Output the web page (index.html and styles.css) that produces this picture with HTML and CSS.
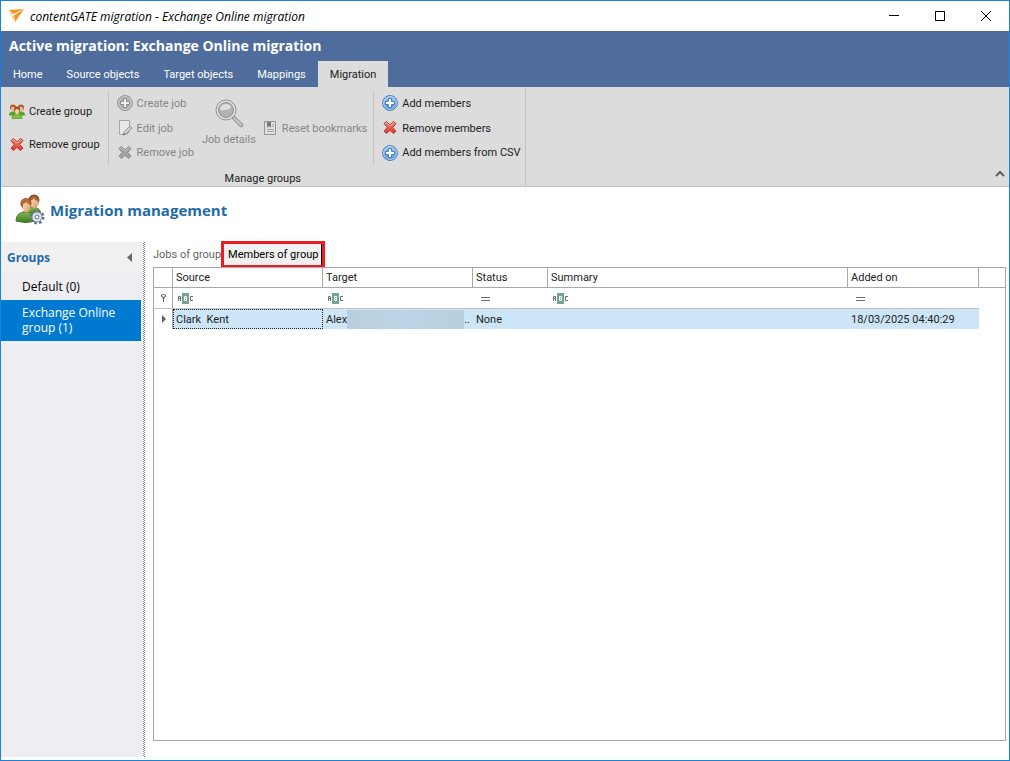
FILE: index.html
```html
<!DOCTYPE html>
<html lang="en">
<head>
    <meta charset="UTF-8">
    <meta name="viewport" content="width=device-width, initial-scale=1.0">
    <title>contentGATE migration - Exchange Online migration</title>
    <link rel="stylesheet" href="styles.css">
</head>
<body>
    <!-- Shared icons -->
    <svg class="icon-defs" aria-hidden="true">
        <defs>
            <linearGradient id="blueFill" x1="0" y1="0" x2="0" y2="1">
                <stop offset="0" stop-color="#9ccaf2"/>
                <stop offset="1" stop-color="#4f97de"/>
            </linearGradient>
            <linearGradient id="redFill" x1="0" y1="0" x2="0" y2="1">
                <stop offset="0" stop-color="#f08a78"/>
                <stop offset="1" stop-color="#d8392a"/>
            </linearGradient>
            <linearGradient id="greenFill" x1="0" y1="0" x2="0" y2="1">
                <stop offset="0" stop-color="#86ba4c"/>
                <stop offset="1" stop-color="#3f7a24"/>
            </linearGradient>
            <linearGradient id="faceFill" x1="0" y1="0" x2="1" y2="1">
                <stop offset="0" stop-color="#fbe0bd"/>
                <stop offset="1" stop-color="#dc9a62"/>
            </linearGradient>
        </defs>
        <symbol id="i-add" viewBox="0 0 16 16">
            <circle cx="8" cy="8" r="7.4" fill="url(#blueFill)" stroke="#4a76b0" stroke-width="1"/>
            <circle cx="8" cy="8" r="6.4" fill="none" stroke="#b4d6f5" stroke-width="1"/>
            <path d="M6.500 3.500h3v3h3v3h-3v3h-3v-3h-3v-3h3z" fill="#fff" stroke="#4a7cbc" stroke-width="1"/>
        </symbol>
        <symbol id="i-add-off" viewBox="0 0 16 16">
            <circle cx="8" cy="8" r="7.4" fill="#b2b2b2" stroke="#8c8c8c" stroke-width="1"/>
            <circle cx="8" cy="8" r="6.4" fill="none" stroke="#cfcfcf" stroke-width="1"/>
            <path d="M6.500 3.500h3v3h3v3h-3v3h-3v-3h-3v-3h3z" fill="#eee" stroke="#8c8c8c" stroke-width="1"/>
        </symbol>
        <symbol id="i-remove" viewBox="0 0 16 16">
            <path d="M2 3.500L4.500 1.500L8 4.800L11.500 1.500L14 3.500L10.800 7.500L14 11.200L11.500 13.500L8 10.300L4.500 13.500L2 11.200L5.200 7.500z" fill="url(#redFill)" stroke="#b8382c" stroke-linejoin="round"/>
            <path d="M3.500 3.700l1-1L8 6l3.500-3.300 1 1" fill="none" stroke="#f8b4a6"/>
        </symbol>
        <symbol id="i-remove-off" viewBox="0 0 16 16">
            <path d="M2 3.500L4.500 1.500L8 4.800L11.500 1.500L14 3.500L10.800 7.500L14 11.200L11.500 13.500L8 10.300L4.500 13.500L2 11.200L5.200 7.500z" fill="#a2a2a2" stroke="#8c8c8c" stroke-linejoin="round"/>
            <path d="M3.500 3.700l1-1L8 6l3.500-3.300 1 1" fill="none" stroke="#c6c6c6"/>
        </symbol>
        <symbol id="i-abc" viewBox="0 0 16 11">
            <path d="M.5 8V3.500h2V8M.5 5.500h2" fill="none" stroke="#6e6e6e"/>
            <rect x="4" y="0" width="7" height="11" fill="#73a594"/>
            <path d="M6.500 3.500h2v4h-2zM6.500 5.500h2" fill="none" stroke="#fff"/>
            <path d="M15 3.500h-2.500v4H15" fill="none" stroke="#6e6e6e"/>
        </symbol>
        <symbol id="i-equals" viewBox="0 0 16 11">
            <path d="M3 4.500h9M3 7.500h9" stroke="#6e6e6e"/>
        </symbol>
    </svg>

    <div class="window">
        <header class="titlebar">
            <svg class="logo" width="16" height="14" viewBox="0 0 16 14">
                <path d="M0 1L15 0L4 5z" fill="#f7941e"/>
                <path d="M15 0L6 13L5 6.500z" fill="#f7941e"/>
                <path d="M1 3l2 2-.5 2.500zM3 8l1.500-1.500L5 12z" fill="#f9b05a"/>
            </svg>
            <span class="window-title">contentGATE migration - Exchange Online migration</span>
            <div class="window-buttons">
                <button type="button" aria-label="Minimize"><svg width="10" height="10" viewBox="0 0 10 10"><path d="M0 4.500h10" stroke="#000"/></svg></button>
                <button type="button" aria-label="Maximize"><svg width="10" height="10" viewBox="0 0 10 10"><rect x=".5" y=".5" width="9" height="9" fill="none" stroke="#000"/></svg></button>
                <button type="button" aria-label="Close"><svg width="10" height="10" viewBox="0 0 10 10"><path d="M0 0l10 10M10 0L0 10" stroke="#000"/></svg></button>
            </div>
        </header>

        <div class="banner">
            <h1>Active migration: Exchange Online migration</h1>
            <nav class="tabs">
                <a href="#home">Home</a>
                <a href="#source">Source objects</a>
                <a href="#target">Target objects</a>
                <a href="#mappings">Mappings</a>
                <a href="#migration" class="active">Migration</a>
            </nav>
        </div>

        <div class="ribbon">
            <section class="ribbon-group">
                <div class="ribbon-tools">
                    <div class="tool-column groups">
                        <button type="button" class="tool">
                            <svg width="16" height="16" viewBox="0 0 16 16">
                                <circle cx="4" cy="3.500" r="3" fill="#a8592a"/>
                                <circle cx="12" cy="3.500" r="3" fill="#a8592a"/>
                                <ellipse cx="4" cy="5" rx="2" ry="2.500" fill="#f0c090"/>
                                <ellipse cx="12" cy="5" rx="2" ry="2.500" fill="#f0c090"/>
                                <path d="M0 11.500q0-4 4-4h8q4 0 4 4z" fill="#5f9e32"/>
                                <path d="M3 14.500q0-5 5-5t5 5z" fill="#7cc242" stroke="#478a22" stroke-width=".6"/>
                                <circle cx="8" cy="5.500" r="3" fill="#9a4d22"/>
                                <ellipse cx="8" cy="7.500" rx="2" ry="2.800" fill="#f7d0a2"/>
                            </svg>
                            Create group
                        </button>
                        <button type="button" class="tool"><svg width="16" height="16"><use href="#i-remove"/></svg>Remove group</button>
                    </div>
                    <div class="tool-column">
                        <button type="button" class="tool" disabled><svg width="16" height="16"><use href="#i-add-off"/></svg>Create job</button>
                        <button type="button" class="tool" disabled>
                            <svg width="16" height="16" viewBox="0 0 16 16">
                                <path d="M2.500.5h10v11l-3 3h-7z" fill="#e8e8e8" stroke="#a6a6a6"/>
                                <path d="M13 6l2 2-6 6-3 1 1-3z" fill="#cdcdcd" stroke="#959595"/>
                                <path d="M6 15l.7-2 1.500 1.300z" fill="#606060"/>
                            </svg>
                            Edit job
                        </button>
                        <button type="button" class="tool" disabled><svg width="16" height="16"><use href="#i-remove-off"/></svg>Remove job</button>
                    </div>
                    <div class="tool-row">
                        <button type="button" class="tool large" disabled>
                            <svg width="32" height="32" viewBox="0 0 32 32">
                                <path d="M19 20l2-2 9 8.500q0 2.500-2.500 2.500z" fill="#c4c4c4" stroke="#858585"/>
                                <circle cx="13" cy="12" r="10" fill="#e4e4e4" stroke="#8e8e8e" stroke-width="1"/>
                                <circle cx="13" cy="12" r="7.500" fill="#b2b2b2" stroke="#8e8e8e" stroke-width="1"/>
                                <path d="M7 12q0-6 6-6 4 0 5 3-3 4-11 3z" fill="#dedede"/>
                            </svg>
                            Job details
                        </button>
                        <button type="button" class="tool" disabled>
                            <svg width="16" height="16" viewBox="0 0 16 16">
                                <rect x="2.500" y="1.500" width="11" height="13" fill="#e2e2e2" stroke="#959595"/>
                                <path d="M5 2h4v6L7 6 5 8z" fill="#777"/>
                                <path d="M10 4.500h2M10 6.500h2M5 9.500h7M5 11.500h7" stroke="#a0a0a0"/>
                            </svg>
                            Reset bookmarks
                        </button>
                    </div>
                    <div class="tool-column">
                        <button type="button" class="tool"><svg width="16" height="16"><use href="#i-add"/></svg>Add members</button>
                        <button type="button" class="tool"><svg width="16" height="16"><use href="#i-remove"/></svg>Remove members</button>
                        <button type="button" class="tool"><svg width="16" height="16"><use href="#i-add"/></svg>Add members from CSV</button>
                    </div>
                </div>
                <div class="ribbon-caption">Manage groups</div>
            </section>
            <button type="button" class="collapse" aria-label="Collapse ribbon"><svg width="10" height="6" viewBox="0 0 10 6"><path d="M1 5l4-4 4 4" fill="none" stroke="#5f5f5f" stroke-width="2"/></svg></button>
        </div>

        <div class="page-header">
            <svg width="32" height="32" viewBox="0 0 32 32">
                <path d="M9 22q0-9 9-9t9 9z" fill="url(#greenFill)" stroke="#477a2c"/>
                <ellipse cx="20" cy="6" rx="5.500" ry="5.500" fill="#8d4a24"/>
                <ellipse cx="20.500" cy="8.500" rx="4" ry="5.500" fill="url(#faceFill)"/>
                <path d="M15 7q2-6 6-5 4 1 4 5-4 0-5-3-2 3-5 3z" fill="#a9612f"/>
                <path d="M2 27q0-9 10-9t10 9q-10 3-20 0z" fill="url(#greenFill)" stroke="#477a2c"/>
                <ellipse cx="12" cy="9.500" rx="5.500" ry="5.500" fill="#8d4a24"/>
                <ellipse cx="12.500" cy="13" rx="4" ry="5.500" fill="url(#faceFill)"/>
                <path d="M7 10q1-6 6-5 4 1 4 6-4-1-5-3-2 3-5 2z" fill="#b56c38"/>
                <circle cx="23" cy="23" r="6" fill="none" stroke="#62708a" stroke-width="3" stroke-dasharray="2.400 2.300"/>
                <circle cx="23" cy="23" r="5" fill="#dfe5ee" stroke="#7e8ba3"/>
                <circle cx="23" cy="23" r="2" fill="#fff" stroke="#62708a"/>
            </svg>
            <h2>Migration management</h2>
        </div>

        <div class="workspace">
            <aside class="sidebar">
                <div class="sidebar-header">
                    <h3>Groups</h3>
                    <button type="button" aria-label="Collapse groups"><svg width="6" height="10" viewBox="0 0 6 10"><path d="M5 0v9L0 4.500z" fill="#6a6a6a"/></svg></button>
                </div>
                <button type="button" class="group">Default (0)</button>
                <button type="button" class="group selected">Exchange Online group (1)</button>
            </aside>
            <div class="splitter"></div>

            <main class="content">
                <div class="content-tabs">
                    <button type="button" class="content-tab">Jobs of group</button>
                    <button type="button" class="content-tab current">Members of group</button>
                </div>
                <div class="grid">
                    <table>
                        <colgroup>
                            <col class="col-indicator">
                            <col class="col-name">
                            <col class="col-name">
                            <col class="col-status">
                            <col class="col-summary">
                            <col class="col-added">
                            <col>
                        </colgroup>
                        <thead>
                            <tr>
                                <th></th>
                                <th>Source</th>
                                <th>Target</th>
                                <th>Status</th>
                                <th>Summary</th>
                                <th>Added on</th>
                                <th></th>
                            </tr>
                        </thead>
                        <tbody>
                            <tr class="filter-row">
                                <td class="indicator"><svg width="7" height="8" viewBox="0 0 7 8"><path d="M1.500 1q2-1 4 0v1.500q-2 1.500-4 0z" fill="#fff" stroke="#5f5f5f"/><path d="M2 3.500h3L4 5v3H3V5z" fill="#5f5f5f"/></svg></td>
                                <td><svg width="16" height="11"><use href="#i-abc"/></svg></td>
                                <td><svg width="16" height="11"><use href="#i-abc"/></svg></td>
                                <td><svg width="16" height="11"><use href="#i-equals"/></svg></td>
                                <td><svg width="16" height="11"><use href="#i-abc"/></svg></td>
                                <td><svg width="16" height="11"><use href="#i-equals"/></svg></td>
                                <td class="rest"></td>
                            </tr>
                            <tr class="data-row">
                                <td class="indicator"><svg width="5" height="8" viewBox="0 0 5 8"><path d="M1 0l4 4-4 4z" fill="#5f5f5f"/></svg></td>
                                <td class="focused">Clark&nbsp; Kent</td>
                                <td><div class="target"><span>Alex</span><span class="redacted"></span><span>..</span></div></td>
                                <td>None</td>
                                <td></td>
                                <td>18/03/2025 04:40:29</td>
                                <td class="rest"></td>
                            </tr>
                        </tbody>
                    </table>
                </div>
            </main>
        </div>
    </div>
</body>
</html>
```
FILE: styles.css
```css
* {
    box-sizing: border-box;
}

body {
    margin: 0;
    font-family: Tahoma, Roboto, sans-serif;
    font-size: 11px;
    line-height: 15px;
    color: #222;
    background: #fff;
}

h1, h2, h3 {
    margin: 0;
    font-family: "Open Sans", sans-serif;
    font-weight: bold;
}

button {
    padding: 0;
    border: none;
    background: none;
    font: inherit;
    color: inherit;
    text-align: left;
    cursor: pointer;
}

svg {
    display: block;
    flex: none;
}

.icon-defs {
    position: absolute;
    width: 0;
    height: 0;
}

.window {
    display: flex;
    flex-direction: column;
    min-height: 100vh;
    border: 1px solid #1a82d8;
}

/* Title bar */
.titlebar {
    display: flex;
    align-items: center;
    height: 30px;
    padding-left: 8px;
    color: #000;
}

.window-title {
    flex: 1;
    margin-left: 5px;
    font-family: "Open Sans", sans-serif;
    font-size: 12px;
    font-style: italic;
}

.window-buttons {
    display: flex;
}

.window-buttons button {
    display: flex;
    align-items: center;
    justify-content: center;
    width: 46px;
    height: 30px;
}

/* Banner and main tabs */
.banner {
    background: #4f6d9c;
    color: #fff;
}

.banner h1 {
    padding: 0 8px;
    font-size: 14px;
    line-height: 30px;
}

.tabs {
    display: flex;
}

.tabs a {
    height: 26px;
    padding: 0 12px;
    line-height: 27px;
    color: #fff;
    text-decoration: none;
}

.tabs .active {
    background: #dcdcdc;
    color: #222;
}

/* Ribbon */
.ribbon {
    display: flex;
    justify-content: space-between;
    align-items: flex-end;
    height: 100px;
    background: #dcdcdc;
    border-bottom: 1px solid #c0c0c0;
}

.ribbon-group {
    height: 99px;
    padding-top: 4px;
    border-right: 1px solid #c4c4c4;
}

.ribbon-tools {
    display: flex;
    height: 74px;
}

.tool-column {
    display: flex;
    flex-direction: column;
    padding: 0 8px;
}

.tool-column:last-child {
    padding-right: 4px;
}

.tool-column + .tool-column,
.tool-row + .tool-column {
    border-left: 1px solid #c4c4c4;
}

.tool-column.groups {
    justify-content: center;
    gap: 8px;
}

.tool-row {
    display: flex;
    align-items: center;
    gap: 6px;
    padding-right: 6px;
}

.tool {
    display: flex;
    align-items: center;
    gap: 4px;
    height: 25px;
    white-space: nowrap;
}

.tool:disabled {
    color: #868686;
    cursor: default;
}

.tool.large {
    flex-direction: column;
    gap: 2px;
    height: 60px;
}

.ribbon-caption {
    padding-top: 4px;
    text-align: center;
    line-height: 19px;
}

.collapse {
    padding: 9px 4px;
}

/* Page header */
.page-header {
    display: flex;
    align-items: center;
    gap: 4px;
    height: 55px;
    padding: 0 13px 9px;
}

.page-header h2 {
    font-size: 15px;
    color: #1f6ba8;
}

/* Sidebar */
.workspace {
    display: flex;
    flex: 1;
    padding-bottom: 3px;
}

.sidebar {
    width: 141px;
    background: #eeedf2;
}

.sidebar-header {
    display: flex;
    align-items: center;
    justify-content: space-between;
    height: 31px;
    padding: 0 9px 0 6px;
    background: #f0f0f0;
}

.sidebar-header h3 {
    font-size: 12px;
    color: #1f6ba8;
}

.group {
    display: block;
    width: 140px;
    padding: 6px 21px;
    font-family: "Open Sans", sans-serif;
    font-size: 12px;
    color: #000;
}

.group.selected {
    padding: 5px 21px 6px;
    background: #007ad1;
    color: #fff;
}

.splitter {
    width: 2px;
    margin-left: 1px;
    background: repeating-conic-gradient(#8a8a8a 0 25%, #fff 0 50%) 0 0 / 2px 2px;
}

/* Content */
.content {
    display: flex;
    flex: 1;
    flex-direction: column;
    padding: 0 3px 16px 8px;
}

.content-tabs {
    display: flex;
    align-items: center;
    height: 25px;
}

.content-tab {
    color: #666;
}

.content-tab.current {
    height: 27px;
    padding: 0 4px;
    border: 3px solid #ec1c24;
    background: #f0f0f0;
    box-shadow: inset -1px 0 #000;
    color: #000;
}

/* Members grid */
.grid {
    flex: 1;
    border: 1px solid #a8a8a8;
}

table {
    width: 100%;
    table-layout: fixed;
    border-collapse: separate;
    border-spacing: 0;
}

.col-indicator {
    width: 19px;
}

.col-name {
    width: 150px;
}

.col-status {
    width: 75px;
}

.col-summary {
    width: 300px;
}

.col-added {
    width: 131px;
}

th, td {
    padding: 0 3px;
    line-height: 19px;
    text-align: left;
    font-weight: normal;
}

th {
    height: 20px;
    border-right: 1px solid #a8a8a8;
    border-bottom: 1px solid #a8a8a8;
}

th:last-child {
    border-right: none;
}

.filter-row td {
    height: 21px;
    padding: 0 5px;
    border-bottom: 1px solid #c0c0c0;
}

.data-row td {
    height: 20px;
    background: #cde6f7;
}

.data-row .indicator,
.data-row .rest {
    background: none;
}

.filter-row .rest {
    border-bottom: none;
}

td.indicator {
    border-right: 1px solid #a8a8a8;
}

td.indicator svg {
    margin: 0 auto;
}

.data-row .focused {
    outline: 1px dotted #222;
    outline-offset: -1px;
}

.target {
    display: flex;
}

.redacted {
    flex: 1;
    height: 19px;
    background: linear-gradient(90deg, #b9cfdf, #bdd4e6 50%, #b8cfdf);
}
```
